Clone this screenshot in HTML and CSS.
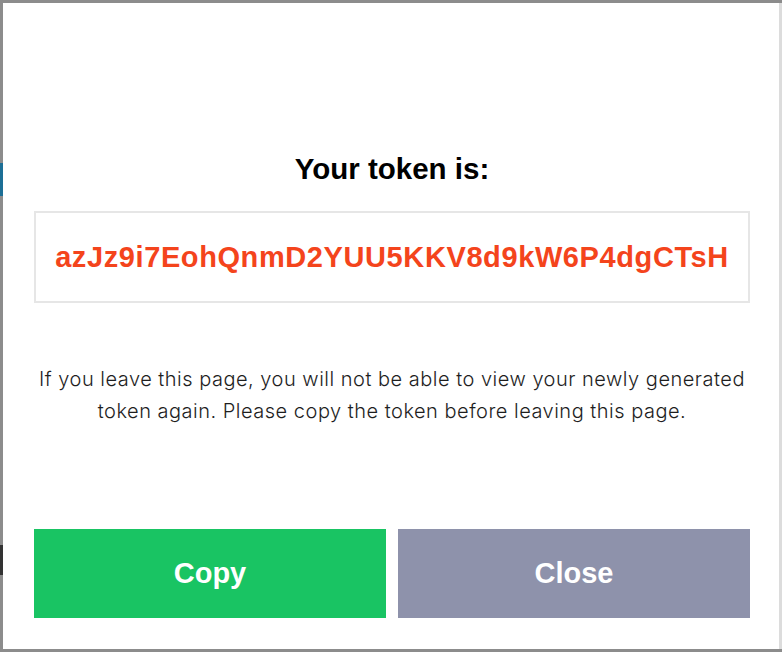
FILE: index.html
```html
<!DOCTYPE html>
<html lang="en">
<head>
<meta charset="utf-8">
<title>Your token</title>
<link rel="stylesheet" href="styles.css">
</head>
<body>
<span class="bg-bit bg-bit-blue"></span>
<span class="bg-bit bg-bit-dark"></span>
<div class="page">
  <div class="modal">
    <h2 class="title">Your token is:</h2>
    <div class="token-box"><span class="token">azJz9i7EohQnmD2YUU5KKV8d9kW6P4dgCTsH</span></div>
    <p class="note">If you leave this page, you will not be able to view your newly generated token again. Please copy the token before leaving this page.</p>
    <div class="actions">
      <button class="btn btn-copy" type="button">Copy</button>
      <button class="btn btn-close" type="button">Close</button>
    </div>
  </div>
</div>
</body>
</html>
```
FILE: styles.css
```css
html, body {
  margin: 0;
  height: 100%;
}
body {
  background: #8c8c8c;
  font-family: "Liberation Sans", Arial, Helvetica, sans-serif;
  overflow: hidden;
  position: relative;
}
.bg-bit {
  position: absolute;
  left: 0;
  width: 3px;
}
.bg-bit-blue {
  top: 163px;
  height: 33px;
  background: #1d6f96;
}
.bg-bit-dark {
  top: 545px;
  height: 30px;
  background: #333;
}
.page {
  padding: 3px 0 0 3px;
  position: relative;
}
.modal {
  width: 779px;
  height: 646px;
  box-sizing: border-box;
  background: #fff;
  border-right: 3px solid #dcdcdc;
  padding: 0 29px 0 31px;
  display: flex;
  flex-direction: column;
}
.title {
  margin: 148px 0 0;
  font-size: 29.5px;
  line-height: 35px;
  font-weight: 700;
  color: #000;
  text-align: center;
}
.token-box {
  margin-top: 25px;
  height: 92px;
  box-sizing: border-box;
  border: 2px solid #e6e6e6;
  display: flex;
  align-items: center;
  justify-content: center;
}
.token {
  color: #f4441c;
  font-size: 29px;
  font-weight: 700;
  letter-spacing: 0.6px;
}
.note {
  margin: 60px 0 0;
  font-family: Inter, "Liberation Sans", Arial, sans-serif;
  font-size: 20px;
  font-weight: 300;
  letter-spacing: 0.5px;
  line-height: 32px;
  color: #1e1e1e;
  text-align: center;
}
.actions {
  margin-top: auto;
  margin-bottom: 31px;
  display: flex;
  gap: 12px;
}
.btn {
  flex: 1;
  height: 89px;
  border: 0;
  margin: 0;
  padding: 0;
  font-family: inherit;
  font-size: 29px;
  font-weight: 700;
  color: #fff;
}
.btn-copy {
  background: #19c463;
}
.btn-close {
  background: #8e92ab;
}
```
